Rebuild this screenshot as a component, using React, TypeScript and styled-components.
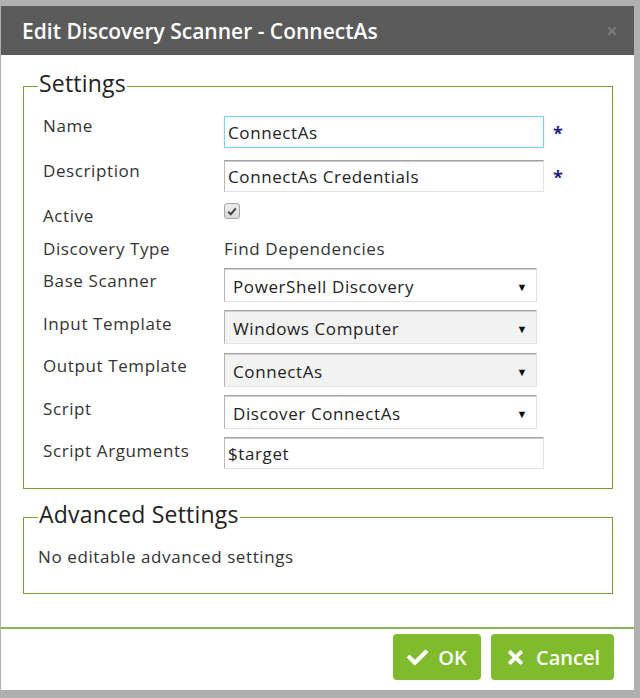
import React from 'react';
import styled, { createGlobalStyle } from 'styled-components';
import { FaCheck, FaTimes } from 'react-icons/fa';

const GlobalStyle = createGlobalStyle`
  html, body {
    margin: 0;
    padding: 0;
    background: #b0b0b0;
    font-family: 'Open Sans', 'Liberation Sans', sans-serif;
  }
`;

const Page = styled.div`
  width: 640px;
  height: 698px;
  padding-top: 6px;
  padding-left: 1px;
  box-sizing: border-box;
  overflow: hidden;
`;

const Dialog = styled.div`
  width: 633px;
  background: #fff;
`;

const Header = styled.div`
  height: 49px;
  background: #5b5b5b;
  display: flex;
  align-items: center;
  justify-content: space-between;
  padding: 0 16px 0 21px;
`;

const Title = styled.h1`
  margin: 0;
  color: #fff;
  font-size: 21px;
  font-weight: 600;
  letter-spacing: 0;
`;

const Close = styled.span`
  display: flex;
  color: #7a7a7a;
`;

const Body = styled.div`
  padding: 17px 21px 33px 22px;
`;

const Fieldset = styled.fieldset<{ $top?: number }>`
  margin: ${(p) => p.$top ?? 0}px 0 0 0;
  padding: 16px 19px 19px 19px;
  border: 1px solid #76a033;
  min-width: 0;
`;

const Legend = styled.legend`
  margin-left: -5px;
  padding: 0 1px 6px 1px;
  font-size: 23px;
  line-height: 22px;
  letter-spacing: 0.2px;
  color: #222;
`;

const Row = styled.div<{ $space: number }>`
  display: grid;
  grid-template-columns: 181px auto 1fr;
  align-items: start;
  margin-bottom: ${(p) => p.$space}px;
  &:last-child {
    margin-bottom: 0;
  }
`;

const Label = styled.div<{ $offset?: number }>`
  padding-top: ${(p) => p.$offset ?? 0}px;
  font-size: 17px;
  line-height: 20px;
  letter-spacing: 0.6px;
  color: #333;
`;

const TextInput = styled.div<{ $focus?: boolean }>`
  width: 320px;
  height: 32px;
  box-sizing: border-box;
  display: flex;
  align-items: center;
  padding-left: 3px;
  font-size: 17px;
  letter-spacing: 0.6px;
  color: #222;
  background: #fff;
  border: 1px solid;
  border-color: ${(p) =>
    p.$focus ? '#79d2f1' : '#a3a3a3 #e3e3e3 #e3e3e3 #b9b9b9'};
  box-shadow: ${(p) =>
    p.$focus ? '0 0 1px #9fe0f5' : 'inset 0 1px 0 #c8c8c8'};
`;

const Required = styled.span`
  margin: 7px 0 0 9px;
  font-size: 18px;
  font-weight: 700;
  color: #1d1f86;
  line-height: 20px;
`;

const SelectBox = styled.div<{ $muted?: boolean }>`
  width: 313px;
  height: 34px;
  box-sizing: border-box;
  display: flex;
  align-items: center;
  justify-content: space-between;
  padding: 2px 8px 0 8px;
  font-size: 17px;
  letter-spacing: 0.6px;
  color: #222;
  background: ${(p) => (p.$muted ? '#f2f2f2' : '#fff')};
  border: 1px solid;
  border-color: #a6a6a6 #e4e4e4 #e4e4e4 #b4b4b4;
  box-shadow: inset 0 1px 0 #cfcfcf;
`;

const Arrow = styled.span`
  font-size: 11px;
  color: #111;
`;

const Value = styled.div`
  font-size: 17px;
  line-height: 20px;
  letter-spacing: 0.6px;
  color: #333;
`;

const Checkbox = styled.span`
  display: flex;
  align-items: center;
  justify-content: center;
  width: 14px;
  height: 14px;
  margin-top: -1px;
  border: 1px solid #a5a5a5;
  border-radius: 3px;
  background: linear-gradient(#ececec, #d9d9d9);
`;

const Note = styled.div`
  font-size: 17px;
  line-height: 20px;
  letter-spacing: 0.6px;
  color: #333;
  padding: 0 0 7px 0;
  margin-left: -5px;
`;

const Footer = styled.div`
  border-top: 2px solid #8db452;
  display: flex;
  justify-content: flex-end;
  gap: 10px;
  padding: 5px 20px 10px 0;
`;

const Button = styled.button<{ $width: number }>`
  width: ${(p) => p.$width}px;
  height: 46px;
  border: none;
  border-radius: 4px;
  background: #80bb2e;
  color: #fff;
  font-family: 'Open Sans', 'Liberation Sans', sans-serif;
  font-size: 20px;
  font-weight: 600;
  display: flex;
  align-items: center;
  justify-content: center;
  gap: 10px;
  padding: 0;
  svg {
    font-size: 21px;
  }
`;

export default function App() {
  return (
    <Page>
      <GlobalStyle />
      <Dialog>
        <Header>
          <Title>Edit Discovery Scanner - ConnectAs</Title>
          <Close>
            <FaTimes size={12} />
          </Close>
        </Header>
        <Body>
          <Fieldset>
            <Legend>Settings</Legend>
            <Row $space={12}>
              <Label>Name</Label>
              <TextInput $focus>ConnectAs</TextInput>
              <Required>*</Required>
            </Row>
            <Row $space={12}>
              <Label $offset={1}>Description</Label>
              <TextInput>ConnectAs Credentials</TextInput>
              <Required>*</Required>
            </Row>
            <Row $space={13}>
              <Label $offset={2}>Active</Label>
              <Checkbox>
                <svg width="10" height="9" viewBox="0 0 10 9">
                  <path d="M1.2 4.8 L3.8 7.2 L8.8 1.4" fill="none" stroke="#444" strokeWidth="2" />
                </svg>
              </Checkbox>
            </Row>
            <Row $space={9}>
              <Label>Discovery Type</Label>
              <Value>Find Dependencies</Value>
            </Row>
            <Row $space={8}>
              <Label $offset={3}>Base Scanner</Label>
              <SelectBox>
                PowerShell Discovery<Arrow>▼</Arrow>
              </SelectBox>
            </Row>
            <Row $space={9}>
              <Label $offset={4}>Input Template</Label>
              <SelectBox $muted>
                Windows Computer<Arrow>▼</Arrow>
              </SelectBox>
            </Row>
            <Row $space={8}>
              <Label $offset={3}>Output Template</Label>
              <SelectBox $muted>
                ConnectAs<Arrow>▼</Arrow>
              </SelectBox>
            </Row>
            <Row $space={8}>
              <Label $offset={4}>Script</Label>
              <SelectBox>
                Discover ConnectAs<Arrow>▼</Arrow>
              </SelectBox>
            </Row>
            <Row $space={0}>
              <Label $offset={4}>Script Arguments</Label>
              <TextInput>$target</TextInput>
            </Row>
          </Fieldset>
          <Fieldset $top={14}>
            <Legend>Advanced Settings</Legend>
            <Note>No editable advanced settings</Note>
          </Fieldset>
        </Body>
        <Footer>
          <Button $width={88}>
            <FaCheck />
            OK
          </Button>
          <Button $width={123}>
            <FaTimes />
            Cancel
          </Button>
        </Footer>
      </Dialog>
    </Page>
  );
}
